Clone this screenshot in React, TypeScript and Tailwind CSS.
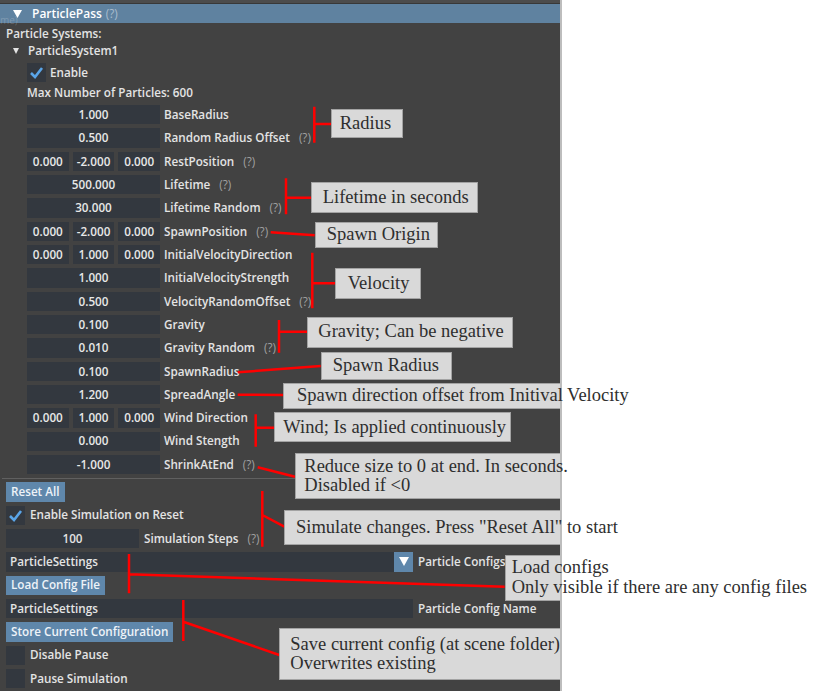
import React from 'react';

type Param = { v: string[]; label: string; help?: boolean };

const params: Param[] = [
  { v: ['1.000'], label: 'BaseRadius' },
  { v: ['0.500'], label: 'Random Radius Offset', help: true },
  { v: ['0.000', '-2.000', '0.000'], label: 'RestPosition', help: true },
  { v: ['500.000'], label: 'Lifetime', help: true },
  { v: ['30.000'], label: 'Lifetime Random', help: true },
  { v: ['0.000', '-2.000', '0.000'], label: 'SpawnPosition', help: true },
  { v: ['0.000', '1.000', '0.000'], label: 'InitialVelocityDirection' },
  { v: ['1.000'], label: 'InitialVelocityStrength' },
  { v: ['0.500'], label: 'VelocityRandomOffset', help: true },
  { v: ['0.100'], label: 'Gravity' },
  { v: ['0.010'], label: 'Gravity Random', help: true },
  { v: ['0.100'], label: 'SpawnRadius' },
  { v: ['1.200'], label: 'SpreadAngle' },
  { v: ['0.000', '1.000', '0.000'], label: 'Wind Direction' },
  { v: ['0.000'], label: 'Wind Stength' },
  { v: ['-1.000'], label: 'ShrinkAtEnd', help: true },
];

// annotation boxes; the ones reaching x=560 get clipped there, text runs on
const notes: { cls: string; pad: string; lines: string[]; open?: boolean }[] = [
  { cls: 'left-[330.7px] top-[109.3px] w-[72px] h-[28.4px]', pad: 'pl-[8px]', lines: ['Radius'] },
  { cls: 'left-[310.7px] top-[182.3px] w-[167px] h-[31px]', pad: 'pl-[11px]', lines: ['Lifetime in seconds'] },
  { cls: 'left-[314.7px] top-[221.7px] w-[123.6px] h-[26px]', pad: 'pl-[11px]', lines: ['Spawn Origin'] },
  { cls: 'left-[335.3px] top-[268px] w-[85.7px] h-[31.3px]', pad: 'pl-[11.5px]', lines: ['Velocity'] },
  { cls: 'left-[307.3px] top-[316.7px] w-[206px] h-[31px]', pad: 'pl-[10px]', lines: ['Gravity; Can be negative'] },
  { cls: 'left-[320.7px] top-[351.7px] w-[131px] h-[28.3px]', pad: 'pl-[11px]', lines: ['Spawn Radius'] },
  { cls: 'left-[283.3px] top-[382.7px] w-[276.7px] h-[26.6px]', pad: 'pl-[12.7px]', lines: ['Spawn direction offset from Initival Velocity'], open: true },
  { cls: 'left-[274.3px] top-[412.3px] w-[237px] h-[30px]', pad: 'pl-[8px]', lines: ['Wind; Is applied continuously'] },
  { cls: 'left-[295px] top-[453.3px] w-[265px] h-[45.7px]', pad: 'pl-[8.3px]', lines: ['Reduce size to 0 at end. In seconds.', 'Disabled if <0'], open: true },
  { cls: 'left-[284.3px] top-[510px] w-[275.7px] h-[35px]', pad: 'pl-[10.7px]', lines: ['Simulate changes. Press "Reset All" to start'], open: true },
  { cls: 'left-[504.7px] top-[555px] w-[55.3px] h-[45.7px]', pad: 'pl-[6px]', lines: ['Load configs', 'Only visible if there are any config files'], open: true },
  { cls: 'left-[279.3px] top-[628.3px] w-[280.7px] h-[51.7px]', pad: 'pl-[10px]', lines: ['Save current config (at scene folder)', 'Overwrites existing'], open: true },
];

const redLines = [
  'M314.3 106.7 V142.7 M314.3 124 H331',
  'M286 178.3 V214.3 M286 197.7 H311',
  'M270.7 232.3 L314.7 235.3',
  'M312.3 252.7 V308.3 M312.3 283.3 H335.3',
  'M279 320 V352.7 M279 331.7 H307.3',
  'M237.7 372.3 L320.7 366',
  'M237.7 394.7 L283.3 395',
  'M255.7 414.3 V446.7 M255.7 427.7 H274.3',
  'M257.7 467.3 L295 476.7',
  'M262.3 491 V546.7 M262.3 515 L284.3 526.7',
  'M129 554 V593.3 M129 574.3 L504.7 586.7',
  'M183.3 600 V641 M183.3 621.7 L279.3 655',
];

function Help() {
  return <span className="ml-[9px] text-[#a0a0a0] font-normal">(?)</span>;
}

function Check({ on }: { on?: boolean }) {
  return (
    <div className="w-[19px] h-[19px] bg-[#33383f] flex items-center justify-center shrink-0">
      {on && (
        <svg width="15" height="13" viewBox="0 0 15 13">
          <path d="M2 7 L6 11 L13 2" fill="none" stroke="#5aa5e8" strokeWidth="2.6" />
        </svg>
      )}
    </div>
  );
}

function Btn({ children }: { children: React.ReactNode }) {
  return (
    <div className="h-full bg-[#5f87ab] px-[5px] flex items-center text-[#eef3f8]">{children}</div>
  );
}

export default function App() {
  return (
    <div
      className="relative w-[815px] h-[691px] bg-white overflow-hidden text-[11.7px] font-semibold text-[#e4e4e4]"
      style={{ fontFamily: '"Open Sans", "DejaVu Sans", sans-serif' }}
    >
      <div className="w-[562px] h-full bg-[#424242] border-r-2 border-[#bdbdbd] flex flex-col">
        <div className="h-[4px] bg-[#4c4c4c] border-b border-[#383838]" />
        <div className="h-[19px] bg-[#5f82a0] flex items-center text-white">
          <svg className="ml-[13px]" width="9" height="8" viewBox="0 0 9 8">
            <path d="M0 0 H9 L4.5 8 Z" fill="#ffffff" />
          </svg>
          <span className="ml-[10px] text-[12px]">ParticlePass</span>
          <span className="ml-[4px] text-[#a9bccd] font-normal">(?)</span>
        </div>
        <div className="h-[22px] flex items-center pl-[6px]">Particle Systems:</div>
        <div className="h-[12px] flex items-center pl-[13px]">
          <svg width="6" height="6" viewBox="0 0 6 6">
            <path d="M0 0 H6 L3 6 Z" fill="#e4e4e4" />
          </svg>
          <span className="ml-[9px]">ParticleSystem1</span>
        </div>
        <div className="mt-[6px] h-[19px] flex items-center pl-[27px]">
          <Check on />
          <span className="ml-[4px]">Enable</span>
        </div>
        <div className="mt-[4px] h-[14px] flex items-center pl-[27px]">Max Number of Particles: 600</div>

        <div className="mt-[5px] pl-[27px] flex flex-col gap-[4px]">
          {params.map((p) => (
            <div key={p.label} className="h-[19.33px] flex items-center">
              <div className="w-[133px] h-full flex gap-[4px]">
                {p.v.map((x, i) => (
                  <div key={i} className="flex-1 h-full bg-[#33383f] flex items-center justify-center text-[#e8e8e8]">
                    {x}
                  </div>
                ))}
              </div>
              <span className="ml-[4px]">{p.label}</span>
              {p.help && <Help />}
            </div>
          ))}
        </div>

        <div className="mt-[4px] ml-[2px] h-px bg-[#606060]" />

        <div className="mt-[3px] pl-[6px] flex flex-col gap-[4px]">
          <div className="h-[19.33px] flex">
            <Btn>Reset All</Btn>
          </div>
          <div className="h-[19.33px] flex items-center">
            <Check on />
            <span className="ml-[5px]">Enable Simulation on Reset</span>
          </div>
          <div className="h-[19.33px] flex items-center">
            <div className="w-[133px] h-full bg-[#33383f] flex items-center justify-center">100</div>
            <span className="ml-[5px]">Simulation Steps</span>
            <Help />
          </div>
          <div className="h-[19.33px] flex items-center">
            <div className="w-[388px] h-full bg-[#33383f] flex items-center pl-[4px]">ParticleSettings</div>
            <div className="w-[19px] h-full bg-[#5f87ab] flex items-center justify-center">
              <svg width="10" height="9" viewBox="0 0 10 9">
                <path d="M0 0 H10 L5 9 Z" fill="#ffffff" />
              </svg>
            </div>
            <span className="ml-[5px]">Particle Configs</span>
          </div>
          <div className="h-[19.33px] flex">
            <Btn>Load Config File</Btn>
          </div>
          <div className="h-[19.33px] flex items-center">
            <div className="w-[407px] h-full bg-[#33383f] flex items-center pl-[4px]">ParticleSettings</div>
            <span className="ml-[5px]">Particle Config Name</span>
          </div>
          <div className="h-[19.33px] flex">
            <Btn>Store Current Configuration</Btn>
          </div>
          <div className="h-[19.33px] flex items-center">
            <Check />
            <span className="ml-[5px]">Disable Pause</span>
          </div>
          <div className="h-[19.33px] flex items-center">
            <Check />
            <span className="ml-[5px]">Pause Simulation</span>
          </div>
        </div>
      </div>

      <span className="absolute left-0 top-[15px] text-[10px] leading-[10px] font-normal text-white/20">me)</span>

      <svg className="absolute left-0 top-0" width="815" height="691" viewBox="0 0 815 691">
        {redLines.map((d, i) => (
          <path key={i} d={d} fill="none" stroke="#ff0000" strokeWidth="2.5" />
        ))}
      </svg>

      {notes.map((n, i) => (
        <div
          key={i}
          className={`absolute ${n.cls} bg-[#d9d9d9] border border-[#a3a3a3] ${n.open ? 'border-r-0' : ''} flex flex-col justify-center ${n.pad} text-[18.5px] leading-[19.5px] font-normal text-[#2e2e2e] whitespace-nowrap overflow-visible`}
          style={{ fontFamily: '"Liberation Serif", "Times New Roman", serif' }}
        >
          {n.lines.map((l) => (
            <div key={l}>{l}</div>
          ))}
        </div>
      ))}
    </div>
  );
}
